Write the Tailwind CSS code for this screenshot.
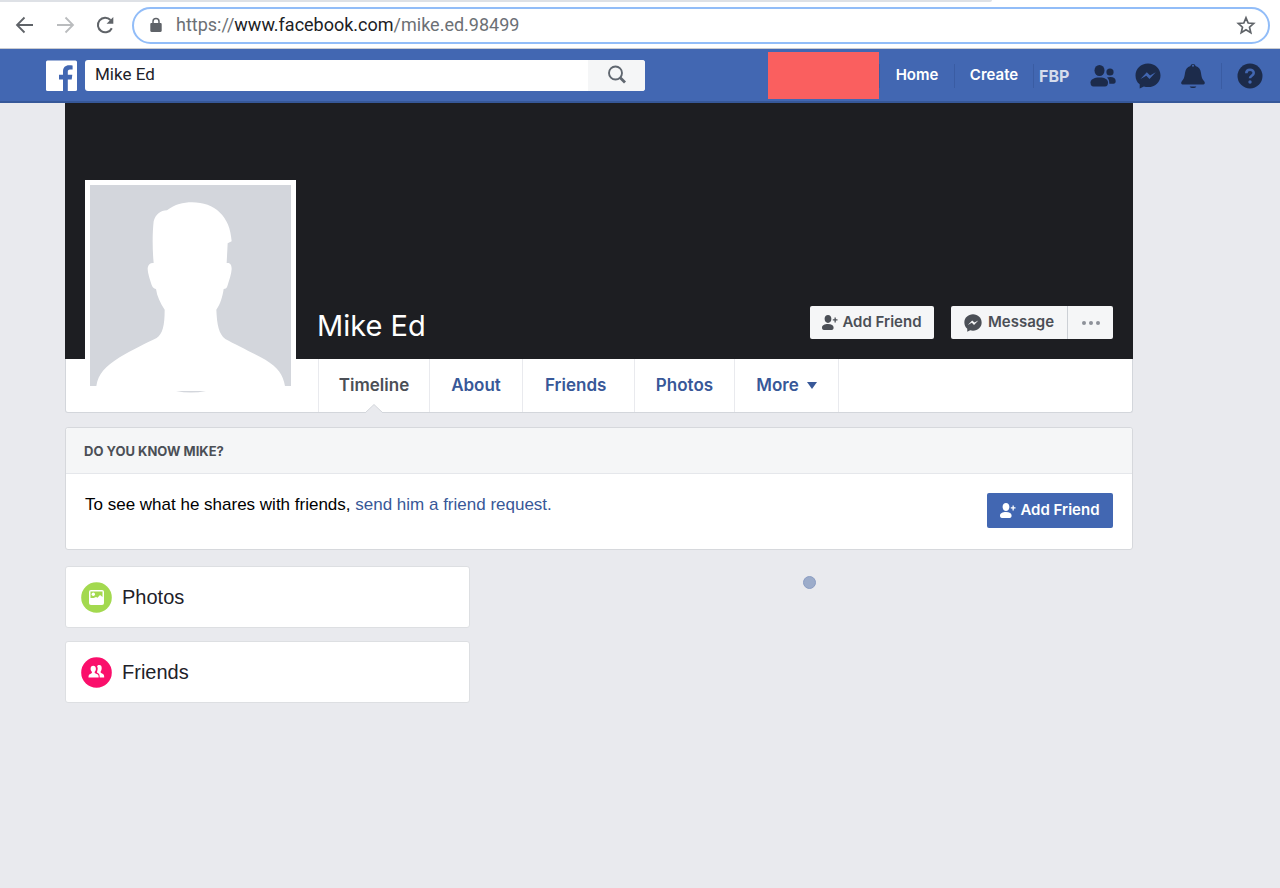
<!DOCTYPE html>
<html lang="en">
<head>
    <meta charset="UTF-8">
    <meta name="viewport" content="width=device-width, initial-scale=1.0">
    <title>Mike Ed</title>
    <script src="https://cdn.jsdelivr.net/npm/@tailwindcss/browser@4"></script>
</head>
<body class="min-h-screen bg-[#e9eaee] font-[Inter,'Liberation_Sans',sans-serif]">
    <!-- Shared icons -->
    <svg class="hidden">
        <symbol id="messenger" viewBox="0 0 26 26">
            <path fill="currentColor" fill-rule="evenodd" d="M13 .5C5.8.5.5 5.7.5 12.4c0 3.700 1.500 6.800 4.200 8.900V25.500l4.200-2c1.300.4 2.600.6 4.100.6 7.200 0 12.500-5.100 12.500-11.700S20.200.5 13 .5zM5.500 16l6.300-6.700 3.300 3.100 5.600-3.100-6.200 6.600-3.200-3.200z"/>
        </symbol>
        <symbol id="addFriend" viewBox="0 0 16 16">
            <path fill="currentColor" d="M6 0c2 0 3.400 1.500 3.400 3.800S8 8 6 8 2.600 6.100 2.600 3.800 4 0 6 0zM0 12.500C0 10.200 2.500 9 6 9s5.600 1.200 5.600 3.500c0 1.500-.5 2.500-2 2.500H2c-1.500 0-2-1-2-2.500zM12.500 2.500h1.300v1.800h1.700v1.300h-1.700v1.800h-1.300V5.600h-1.700V4.300h1.700z"/>
        </symbol>
    </svg>

    <!-- Browser toolbar -->
    <div class="flex h-[2px] bg-white">
        <div class="w-[992px] rounded-br bg-[#dee1e6]"></div>
    </div>
    <div class="flex h-[47px] items-center border-b border-[#c9cbd0] bg-white pr-2.5 pl-[13px]">
        <button class="flex w-10 pl-0.5" aria-label="Back">
            <svg class="size-5" viewBox="0 0 20 20" fill="none" stroke="#5f6368" stroke-width="1.800"><path d="M18 10H2.500M9.500 2.500L2 10l7.500 7.500"/></svg>
        </button>
        <button class="flex w-10 pl-0.5" aria-label="Forward">
            <svg class="size-5" viewBox="0 0 20 20" fill="none" stroke="#babcbe" stroke-width="1.800"><path d="M2 10h15.500M10.500 2.500L18 10l-7.500 7.500"/></svg>
        </button>
        <button class="flex w-[39px] pl-0.5" aria-label="Reload">
            <svg class="size-5" viewBox="0 0 20 20" fill="none"><path d="M16.800 13.200A7.300 7.300 0 1 1 15.500 5" stroke="#5f6368" stroke-width="2"/><path d="M18.300 2v6.700h-6.700z" fill="#5f6368"/></svg>
        </button>
        <div class="flex h-[37px] flex-1 items-center rounded-full border-2 border-[#92bdf8] px-4">
            <svg class="mr-3.5 h-4 w-3" viewBox="0 0 12 16"><path d="M1.500 6h9c.7 0 1.200.5 1.200 1.200v6.600c0 .7-.5 1.200-1.200 1.200h-9C.8 15 .3 14.500.3 13.800V7.200C.3 6.500.8 6 1.500 6z" fill="#5f6368"/><path d="M3 6V4.500a3 3 0 0 1 6 0V6" fill="none" stroke="#5f6368" stroke-width="1.500"/></svg>
            <div class="flex-1 font-[Roboto,sans-serif] text-lg text-[#6c7075]">https://<span class="text-[#202124]">www.facebook.com</span>/mike.ed.98499</div>
            <button aria-label="Bookmark">
                <svg class="-mr-1 size-5" viewBox="0 0 20 20" fill="none" stroke="#5f6368" stroke-width="1.700"><path d="M10 2.800l2.200 5.200 5.500.5-4.200 3.700 1.300 5.500-4.800-2.900-4.800 2.900 1.300-5.500-4.200-3.700 5.500-.5z"/></svg>
            </button>
        </div>
    </div>

    <!-- Blue header -->
    <header class="flex h-[54px] items-center border-b-2 border-[#365899] bg-[#4267b2] pr-0.5 pl-[46px]">
        <a href="#" aria-label="Facebook" class="mr-2">
            <svg class="size-[31px]" viewBox="0 0 31 31"><rect y=".5" width="31" height="30.500" rx="1.500" fill="#fff"/><path d="M17 31V19.500h-4v-4.700h4v-3.300c0-4 2.400-6.200 6-6.200 1.700 0 3.200.1 3.600.2v4.100h-2.500c-1.900 0-2.300.9-2.300 2.300v2.900h4.500l-.6 4.700h-3.900V31z" fill="#4267b2"/></svg>
        </a>
        <form class="flex h-[31px] w-[560px] overflow-hidden rounded-[3px] bg-white">
            <input type="text" aria-label="Search" value="Mike Ed" class="min-w-0 flex-1 px-2.5 font-[Roboto,sans-serif] text-[17px] text-[#1d2129] outline-none">
            <button type="button" aria-label="Search" class="flex w-[57px] items-center justify-center bg-[#f5f6f7]">
                <svg class="size-5" viewBox="0 0 20 20" fill="none" stroke="#606770"><circle cx="8.500" cy="8" r="6.500" stroke-width="1.900"/><path d="M13 12.500l5 5" stroke-width="2.800"/></svg>
            </button>
        </form>
        <nav class="ml-auto flex items-center pt-px text-[15px] font-semibold text-white">
            <div class="h-[47px] w-[111px] bg-[#fa5f5f]"></div>
            <a href="#" class="flex h-6 w-[76px] items-center justify-center border-x border-[#3a5ca3]">Home</a>
            <a href="#" class="flex h-6 w-[79px] items-center justify-center border-r border-[#3a5ca3]">Create</a>
            <a href="#" class="w-[46px] pl-[5px] text-base font-bold text-[#d5dcec]">FBP</a>
            <button aria-label="Friend requests" class="flex w-[45px] justify-center text-[#1c2b4b]">
                <svg class="size-[26px]" viewBox="0 0 26 26" fill="currentColor"><ellipse cx="9.500" cy="7.500" rx="5" ry="5.500"/><path d="M.5 19.500C.5 16.500 4 14.500 9.500 14.500s8.500 2 8.500 5c0 2.800-1 4-3 4H3.500c-2 0-3-1.200-3-4z"/><circle cx="20" cy="9" r="3.600"/><path d="M17 14.600c1-.4 2-.6 3.300-.6 3.400 0 5.400 1.500 5.400 4 0 1.700-.7 2.700-2.200 2.700h-4.200c.1-2.800-.6-4.700-2.300-6.100z"/></svg>
            </button>
            <button aria-label="Messages" class="flex w-[45px] justify-center text-[#1c2b4b]">
                <svg class="size-[26px]"><use href="#messenger"/></svg>
            </button>
            <button aria-label="Notifications" class="flex w-[45px] justify-center text-[#1c2b4b]">
                <svg class="size-[26px]" viewBox="0 0 26 26"><path d="M10.500 3C10.500.2 15.500.2 15.500 3c3.500 1 5 3.500 5.500 7 .6 4.500 1.200 6 3 8 1.500 1.900.8 3.500-1.200 3.500H3.200c-2 0-2.700-1.600-1.200-3.500 1.800-2 2.400-3.500 3-8 .5-3.500 2-6 5.500-7zM9.700 23.500h6.600c-.8 2-5.800 2-6.600 0z" fill="currentColor"/><circle cx="13" cy="2.800" r="1" fill="#4267b2"/></svg>
            </button>
            <button aria-label="Help" class="ml-1.5 flex w-[57px] justify-center border-l border-[#3a5ca3] text-[#1c2b4b]">
                <svg class="size-[26px]" viewBox="0 0 26 26"><circle cx="13" cy="13" r="12.500" fill="currentColor"/><path d="M9.300 10.200c0-4.700 7.400-4.500 7.400-.3 0 2.900-3.700 2.800-3.700 5.400" fill="none" stroke="#4267b2" stroke-width="2.600"/><circle cx="13" cy="19" r="1.700" fill="#4267b2"/></svg>
            </button>
        </nav>
    </header>

    <main class="ml-[65px] max-w-[1068px]">
        <!-- Cover -->
        <section class="relative">
            <div class="flex h-64 items-end bg-[#1d1e22] pr-5 pb-5 pl-[252px]">
                <h1 class="flex-1 text-[29px] leading-[26px] text-white">Mike Ed</h1>
                <div class="flex h-[33px] text-[15px] font-semibold text-[#4b4f56]">
                    <button class="mr-[17px] flex w-[124px] items-center justify-center gap-1 rounded-[2px] bg-[#f5f6f7]">
                        <svg class="size-4"><use href="#addFriend"/></svg>
                        Add Friend
                    </button>
                    <button class="flex w-[117px] items-center justify-center gap-1.5 rounded-l-[2px] border-r border-[#ccd0d5] bg-[#f5f6f7]">
                        <svg class="size-[18px]"><use href="#messenger"/></svg>
                        Message
                    </button>
                    <button aria-label="More actions" class="flex w-[45px] items-center justify-center gap-[3px] rounded-r-[2px] bg-[#f5f6f7]">
                        <span class="size-1 rounded-full bg-[#8d9199]"></span>
                        <span class="size-1 rounded-full bg-[#8d9199]"></span>
                        <span class="size-1 rounded-full bg-[#8d9199]"></span>
                    </button>
                </div>
            </div>
            <nav class="flex h-[54px] rounded-b-[3px] border border-t-0 border-[#d3d6db] bg-white pl-[252px] text-[17px] font-semibold text-[#385898]">
                <a href="#" class="relative flex w-[112px] items-center justify-center border-x border-[#e9eaee] text-[#4b4f56]">Timeline
                    <svg class="absolute -bottom-px h-[9px] w-[18px]" viewBox="0 0 18 9"><path d="M0 9l9-8.500L18 9" fill="#e9eaee" stroke="#d3d6db"/></svg>
                </a>
                <a href="#" class="flex w-[93px] items-center justify-center border-r border-[#e9eaee]">About</a>
                <a href="#" class="flex w-[112px] items-center border-r border-[#e9eaee] pl-[22px]">Friends</a>
                <a href="#" class="flex w-[100px] items-center justify-center border-r border-[#e9eaee]">Photos</a>
                <a href="#" class="flex w-[104px] items-center justify-center gap-2 border-r border-[#e9eaee]">More
                    <svg class="h-[7px] w-2.5" viewBox="0 0 10 7"><path d="M0 0h10L5 7z" fill="currentColor"/></svg>
                </a>
            </nav>
            <!-- Profile picture -->
            <div class="absolute top-[77px] left-5 size-[211px] bg-white p-[5px]">
                <svg class="size-[201px]" viewBox="91 46 603 603">
                    <rect x="91" y="46" width="603" height="603" fill="#d3d6dc"/>
                    <path fill="#fff" d="M110 649C116 612 136 591 180 563C218 540 260 520 291 505C309 492 315 468 315 420C302 400 292 380 289 358C280 356 278 352 274 340C268 320 264 308 264 295C266 284 272 279 282 280C278 240 278 190 282 155C288 133 302 123 322 122C346 104 370 98 397 98C465 98 512 140 516 215L504 221L501 280C512 278 516 286 516 298C515 314 509 330 503 350C500 357 497 358 492 358C489 380 482 404 470 420C472 465 477 492 497 508C530 526 580 550 617 570C655 594 670 614 676 649z"/>
                </svg>
                <svg class="mx-auto mt-1 h-[3px] w-8" viewBox="0 0 32 3"><path d="M1 1h30Q16 4 1 1z" fill="#d3d6dc"/></svg>
            </div>
        </section>

        <!-- Friend prompt -->
        <section class="mt-3.5 rounded-[3px] border border-[#d6d8dc] bg-white">
            <h2 class="flex h-[46px] items-center rounded-t-[3px] border-b border-[#e5e7eb] bg-[#f5f6f7] px-[18px] pt-0.5 text-[13px] font-bold text-[#4b4f56] uppercase">Do you know Mike?</h2>
            <div class="flex h-[75px] items-start justify-between px-[19px] pt-[19px]">
                <p class="font-['Liberation_Sans',sans-serif] text-[17px] leading-6 text-black">To see what he shares with friends, <a href="#" class="text-[#385898]">send him a friend request.</a></p>
                <button class="flex h-[35px] w-[126px] items-center justify-center gap-1 rounded-[2px] bg-[#4267b2] text-[15px] font-semibold text-white">
                    <svg class="size-4"><use href="#addFriend"/></svg>
                    Add Friend
                </button>
            </div>
        </section>

        <div class="mt-4 flex gap-[15px]">
            <div class="flex w-[405px] flex-col gap-[13px]">
                <section class="flex h-[62px] items-center gap-2.5 rounded-[3px] border border-[#dddfe2] bg-white px-[15px]">
                    <svg class="size-[31px]" viewBox="0 0 31 31"><circle cx="15.500" cy="15.500" r="15.300" fill="#a3d94f"/><rect x="8" y="8" width="15" height="15" rx="2" fill="#fff"/><path d="M9.500 9.500h12v5.500l-2.500-2-2.500 2.700-1.500-.8-2.300 1.100H9.500z" fill="#a3d94f"/><circle cx="12.300" cy="12.200" r="1.700" fill="#fff"/></svg>
                    <h3 class="font-['Liberation_Sans',sans-serif] text-xl text-[#1d2129]">Photos</h3>
                </section>
                <section class="flex h-[62px] items-center gap-2.5 rounded-[3px] border border-[#dddfe2] bg-white px-[15px]">
                    <svg class="size-[31px]" viewBox="0 0 31 31"><circle cx="15.500" cy="15.500" r="15.300" fill="#fa0f6b"/><path fill="#fff" d="M12.200 8.700c1.700 0 2.700 1.100 2.700 3 0 1.400-.4 2.400-1.200 3.100v1.300l2.600 1.100c1 .4 1.400 1 1.400 3.300H7.500c0-2.300.4-2.900 1.400-3.300l2-1.100v-1.300c-.8-.7-1.300-1.700-1.300-3.100 0-1.900.9-3 2.600-3zM18.300 8c1.700 0 2.400 1.200 2.400 3 0 1.500-.4 2.600-1 3.300v1.500l2.300 1.300c.8.500 1.200 1.200 1.200 3.400h-4.500c0-2.600-.5-3.700-1.600-4.200l-1-.5v-1.500c.4-.9.600-1.700.6-2.800 0-.8-.2-1.500-.6-2.100.4-.9 1.100-1.400 2.200-1.400z"/></svg>
                    <h3 class="font-['Liberation_Sans',sans-serif] text-xl text-[#1d2129]">Friends</h3>
                </section>
            </div>
            <div class="flex flex-1 justify-center pt-2.5">
                <span class="size-[13px] rounded-full border border-[#8b9dc3] bg-[#9cacca]"></span>
            </div>
        </div>
    </main>
</body>
</html>
